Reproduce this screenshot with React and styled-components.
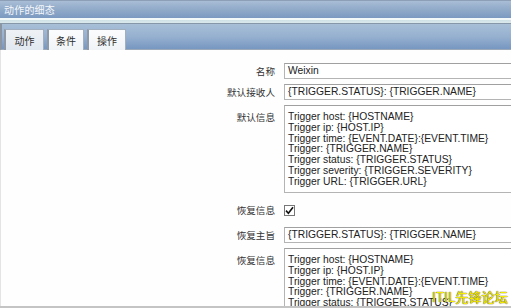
import React from "react";
import styled, { createGlobalStyle } from "styled-components";

const GlobalStyle = createGlobalStyle`
  html, body {
    margin: 0;
    padding: 0;
    background: #c4c4c4;
    overflow: hidden;
  }
  body {
    font-family: "Liberation Sans", "Noto Sans CJK SC", sans-serif;
  }
`;

const Page = styled.div`
  position: relative;
  width: 511px;
  height: 308px;
  overflow: hidden;
  background: #c4c4c4;
`;

const TitleBar = styled.div`
  height: 17px;
  border-top: 1px solid #8d9fb6;
  background: linear-gradient(#a9bdd6, #8ea8c8 55%, #7b99c0);
  display: flex;
  align-items: center;
  padding-left: 4px;
  color: #f4f7fb;
  font-family: "Noto Sans CJK SC", sans-serif;
  font-size: 10px;
  letter-spacing: 0.2px;
`;

const Divider = styled.div`
  height: 5px;
  background: linear-gradient(#f2f7f8 0, #f2f7f8 2px, #cfe1e6 2px, #dbe9ec 100%);
`;

const TabBar = styled.div`
  height: 25px;
  border-top: 1px solid #8797aa;
  border-left: 2px solid #8c96a2;
  background: linear-gradient(#a8bfd7, #96b0cf 50%, #7797c1);
  display: flex;
  align-items: flex-end;
  gap: 3px;
  padding-left: 2px;
  border-bottom: 1px solid #9aa8b8;
`;

const Tab = styled.div`
  width: ${(p) => p.$w}px;
  height: 21px;
  margin-bottom: -1px;
  box-sizing: border-box;
  border: 1px solid #a2afbf;
  border-left: 2px solid #8f99a6;
  border-bottom: none;
  background: ${(p) =>
    p.$active ? "linear-gradient(#eef2f6, #e1e8ef)" : "linear-gradient(#fbfcfd, #f1f4f7)"};
  display: flex;
  align-items: center;
  justify-content: center;
  font-family: "Noto Sans CJK SC", sans-serif;
  font-size: 10px;
  color: #2e2e2e;
`;

const Content = styled.div`
  height: 256px;
  background: #fefefe;
  border-left: 1px solid #e4e4e4;
  padding-top: 13px;
  box-sizing: border-box;
  overflow: hidden;
`;

const Form = styled.div`
  width: 580px;
  display: grid;
  grid-template-columns: 274px 1fr;
  column-gap: 9px;
  row-gap: 5px;
`;

const Label = styled.div`
  text-align: right;
  font-family: "Noto Sans CJK SC", sans-serif;
  font-size: 9.6px;
  color: #333;
  line-height: 16px;
  padding-top: ${(p) => (p.$top ? 4 : 0)}px;
  margin-top: ${(p) => p.$mt || 0}px;
`;

const Input = styled.div`
  height: 16px;
  box-sizing: border-box;
  border: 1px solid #b4b4b4;
  border-top-color: #a0a0a0;
  padding-left: 3px;
  font-size: 10.3px;
  line-height: 14px;
  color: #222;
  white-space: nowrap;
  background: #fff;
  margin-top: ${(p) => p.$mt || 0}px;
`;

const TextBox = styled.div`
  height: ${(p) => p.$h}px;
  box-sizing: border-box;
  border: 1px solid #b4b4b4;
  border-top-color: #a0a0a0;
  padding: 6px 0 0 3px;
  font-size: 10.3px;
  line-height: 10.8px;
  color: #222;
  white-space: pre;
  overflow: hidden;
  background: #fff;
`;

const CheckCell = styled.div`
  margin-top: 4px;
  height: 16px;
  display: flex;
  align-items: center;
`;

const Check = styled.div`
  width: 11px;
  height: 11px;
  box-sizing: border-box;
  border: 1px solid #777;
  background: #fff;
  display: flex;
  align-items: center;
  justify-content: center;
`;

const Watermark = styled.div`
  position: absolute;
  right: 3px;
  bottom: 4px;
  font-family: "Noto Sans CJK SC", sans-serif;
  font-size: 13px;
  line-height: 15px;
  color: #f6ec00;
  text-shadow: 0 0 1px #5a4e00, 0 0 1px #5a4e00;
  letter-spacing: 0.2px;
`;

const message = `Trigger host: {HOSTNAME}
Trigger ip: {HOST.IP}
Trigger time: {EVENT.DATE}:{EVENT.TIME}
Trigger: {TRIGGER.NAME}
Trigger status: {TRIGGER.STATUS}
Trigger severity: {TRIGGER.SEVERITY}
Trigger URL: {TRIGGER.URL}`;

export default function App() {
  return (
    <>
      <GlobalStyle />
      <Page>
        <TitleBar>动作的细态</TitleBar>
        <Divider />
        <TabBar>
          <Tab $active $w={40}>动作</Tab>
          <Tab $w={37}>条件</Tab>
          <Tab $w={39}>操作</Tab>
        </TabBar>
        <Content>
          <Form>
            <Label>名称</Label>
            <Input>Weixin</Input>

            <Label>默认接收人</Label>
            <Input>{"{TRIGGER.STATUS}: {TRIGGER.NAME}"}</Input>

            <Label $top>默认信息</Label>
            <TextBox $h={88}>{message}</TextBox>

            <Label $mt={4}>恢复信息</Label>
            <CheckCell>
              <Check>
                <svg width="9" height="9" viewBox="0 0 9 9">
                  <path d="M1 4.6 L3.4 7.2 L8 1.2" fill="none" stroke="#111" strokeWidth="1.6" />
                </svg>
              </Check>
            </CheckCell>

            <Label $mt={4}>恢复主旨</Label>
            <Input $mt={4}>{"{TRIGGER.STATUS}: {TRIGGER.NAME}"}</Input>

            <Label $top>恢复信息</Label>
            <TextBox $h={88}>{message}</TextBox>
          </Form>
        </Content>
        <Watermark>ITIL先锋论坛</Watermark>
      </Page>
    </>
  );
}
